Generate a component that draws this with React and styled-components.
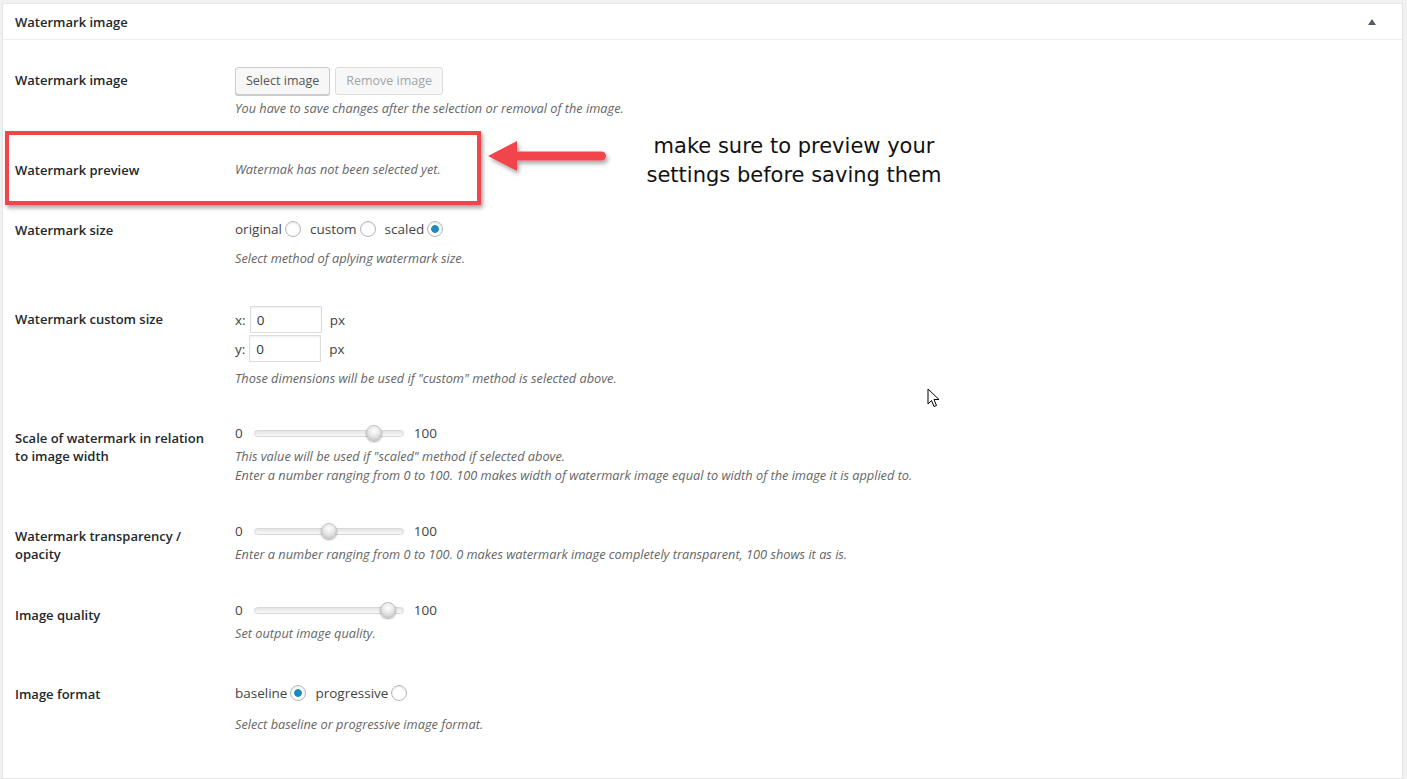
import React from "react";
import styled, { createGlobalStyle } from "styled-components";

const GlobalStyle = createGlobalStyle`
  body {
    margin: 0;
    background: #f1f1f1;
    font-family: "Open Sans", "Noto Sans", sans-serif;
  }
`;

const Page = styled.div`
  position: relative;
  padding: 3px 4px 0 2px;
  height: 779px;
  box-sizing: border-box;
  overflow: hidden;
`;

const Panel = styled.div`
  background: #fff;
  border: 1px solid #e5e5e5;
  box-shadow: 0 1px 1px rgba(0, 0, 0, 0.04);
  height: 100%;
  box-sizing: border-box;
`;

const Header = styled.div`
  display: flex;
  align-items: center;
  justify-content: space-between;
  height: 35px;
  padding: 0 12px;
  border-bottom: 1px solid #eee;
`;

const Title = styled.h2`
  margin: 0;
  font-size: 13px;
  font-weight: 600;
  color: #23282d;
`;

const Toggle = styled.span`
  width: 0;
  height: 0;
  margin-right: 14px;
  border-left: 4px solid transparent;
  border-right: 4px solid transparent;
  border-bottom: 6px solid #555d66;
`;

const Body = styled.div`
  padding: 0 12px;
`;

const Row = styled.div`
  display: grid;
  grid-template-columns: 220px 1fr;
  padding-top: ${(p) => p.$pt}px;
`;

const Label = styled.div`
  margin-top: ${(p) => p.$lm || 0}px;
  font-size: 13px;
  font-weight: 600;
  line-height: 18px;
  color: #23282d;
`;

const Field = styled.div`
  font-size: 13.5px;
  line-height: 18px;
  color: #444;
`;

const Line = styled.div`
  display: flex;
  align-items: center;
  height: ${(p) => p.$h || 18}px;
  margin-bottom: ${(p) => p.$mb || 0}px;
`;

const Desc = styled.p`
  margin: ${(p) => p.$mt || 0}px 0 0;
  font-size: 12.75px;
  font-style: italic;
  line-height: 19px;
  color: #666;
`;

const Button = styled.button`
  height: 28px;
  padding: 0 10px;
  margin-right: 5px;
  font-family: inherit;
  font-size: 12.5px;
  line-height: 26px;
  color: ${(p) => (p.disabled ? "#a0a5aa" : "#555")};
  background: #f7f7f7;
  border: 1px solid ${(p) => (p.disabled ? "#ddd" : "#ccc")};
  border-radius: 3px;
  box-shadow: ${(p) => (p.disabled ? "none" : "0 1px 0 #ccc")};
`;

const Radio = styled.input.attrs({ type: "radio" })`
  appearance: none;
  width: 16px;
  height: 16px;
  margin: 0 9px 0 3px;
  border: 1px solid #b4b9be;
  border-radius: 50%;
  box-shadow: inset 0 1px 2px rgba(0, 0, 0, 0.1);
  background: #fff;
  &:checked {
    background: radial-gradient(circle, #1e8cbe 0 3.5px, #fff 4.2px);
  }
`;

const SizeInput = styled.input`
  width: 72px;
  height: 27px;
  box-sizing: border-box;
  margin: 0 8px 0 4px;
  padding: 0 6px;
  font-family: inherit;
  font-size: 13.5px;
  color: #32373c;
  border: 1px solid #ddd;
  box-shadow: inset 0 1px 2px rgba(0, 0, 0, 0.07);
`;

const Range = styled.input.attrs({ type: "range", min: 0, max: 100 })`
  appearance: none;
  width: 150px;
  height: 18px;
  margin: 0 10px 0 11px;
  background: transparent;
  &::-webkit-slider-runnable-track {
    height: 7px;
    border: 1px solid #d8d8d8;
    border-radius: 5px;
    background: linear-gradient(#e4e4e4, #f8f8f8);
  }
  &::-webkit-slider-thumb {
    appearance: none;
    width: 16px;
    height: 16px;
    margin-top: -5.5px;
    border-radius: 50%;
    border: 1px solid #c4c4c4;
    background: radial-gradient(circle at 50% 35%, #fff 0, #e8e8e8 45%, #bdbdbd 100%);
    box-shadow: 0 1px 2px rgba(0, 0, 0, 0.35);
  }
`;

const RedBox = styled.div`
  position: absolute;
  left: 5px;
  top: 131px;
  width: 476px;
  height: 74px;
  box-sizing: border-box;
  border: 4px solid #f2454b;
  box-shadow: 2px 3px 4px rgba(0, 0, 0, 0.35);
`;

const Arrow = styled.svg`
  position: absolute;
  left: 484px;
  top: 136px;
`;

const Note = styled.div`
  position: absolute;
  left: 594px;
  top: 132px;
  width: 400px;
  text-align: center;
  font-family: "DejaVu Sans", sans-serif;
  font-size: 21px;
  line-height: 29px;
  color: #111;
`;

const Cursor = styled.svg`
  position: absolute;
  left: 927px;
  top: 388px;
`;

function Slider({ value }) {
  return (
    <Line>
      0<Range defaultValue={value} />100
    </Line>
  );
}

export default function App() {
  return (
    <Page>
      <GlobalStyle />
      <Panel>
        <Header>
          <Title>Watermark image</Title>
          <Toggle />
        </Header>
        <Body>
          <Row $pt={27}>
            <Label $lm={4}>Watermark image</Label>
            <Field>
              <Line $h={28}>
                <Button>Select image</Button>
                <Button disabled>Remove image</Button>
              </Line>
              <Desc $mt={4}>You have to save changes after the selection or removal of the image.</Desc>
            </Field>
          </Row>

          <Row $pt={42}>
            <Label $lm={1}>Watermark preview</Label>
            <Field>
              <Desc>Watermak has not been selected yet.</Desc>
            </Field>
          </Row>

          <Row $pt={41}>
            <Label $lm={1}>Watermark size</Label>
            <Field>
              <Line>
                original<Radio name="size" />
                custom<Radio name="size" />
                scaled<Radio name="size" defaultChecked />
              </Line>
              <Desc $mt={11}>Select method of aplying watermark size.</Desc>
            </Field>
          </Row>

          <Row $pt={38}>
            <Label $lm={4}>Watermark custom size</Label>
            <Field>
              <Line $h={27} $mb={2}>
                x:<SizeInput defaultValue="0" />px
              </Line>
              <Line $h={27}>
                y:<SizeInput defaultValue="0" />px
              </Line>
              <Desc $mt={7}>Those dimensions will be used if "custom" method is selected above.</Desc>
            </Field>
          </Row>

          <Row $pt={36}>
            <Label $lm={5}>
              Scale of watermark in relation
              <br />
              to image width
            </Label>
            <Field>
              <Slider value={84} />
              <Desc $mt={5}>
                This value will be used if "scaled" method if selected above.
                <br />
                Enter a number ranging from 0 to 100. 100 makes width of watermark image equal to width of the image it is applied to.
              </Desc>
            </Field>
          </Row>

          <Row $pt={37}>
            <Label $lm={5}>
              Watermark transparency /
              <br />
              opacity
            </Label>
            <Field>
              <Slider value={50} />
              <Desc $mt={5}>Enter a number ranging from 0 to 100. 0 makes watermark image completely transparent, 100 shows it as is.</Desc>
            </Field>
          </Row>

          <Row $pt={37}>
            <Label $lm={5}>Image quality</Label>
            <Field>
              <Slider value={95} />
              <Desc $mt={5}>Set output image quality.</Desc>
            </Field>
          </Row>

          <Row $pt={41}>
            <Label $lm={1}>Image format</Label>
            <Field>
              <Line>
                baseline<Radio name="format" defaultChecked />
                progressive<Radio name="format" />
              </Line>
              <Desc $mt={13}>Select baseline or progressive image format.</Desc>
            </Field>
          </Row>
        </Body>
      </Panel>

      <RedBox />
      <Arrow width="130" height="46" viewBox="0 0 130 46">
        <defs>
          <filter id="sh" x="-10%" y="-30%" width="130%" height="170%">
            <feDropShadow dx="2" dy="3" stdDeviation="2" floodOpacity="0.35" />
          </filter>
        </defs>
        <g filter="url(#sh)" fill="#f2454b">
          <path d="M4 20 L33 5 L33 35 Z" />
          <rect x="30" y="15.5" width="92" height="9" rx="4.5" />
        </g>
      </Arrow>
      <Note>
        make sure to preview your
        <br />
        settings before saving them
      </Note>
      <Cursor width="14" height="22" viewBox="0 0 14 22">
        <path d="M1 1 L1 16 L4.5 12.5 L7 18.5 L9.5 17.5 L7 11.5 L12 11.5 Z" fill="#fff" stroke="#000" strokeWidth="1" strokeLinejoin="round" />
      </Cursor>
    </Page>
  );
}
